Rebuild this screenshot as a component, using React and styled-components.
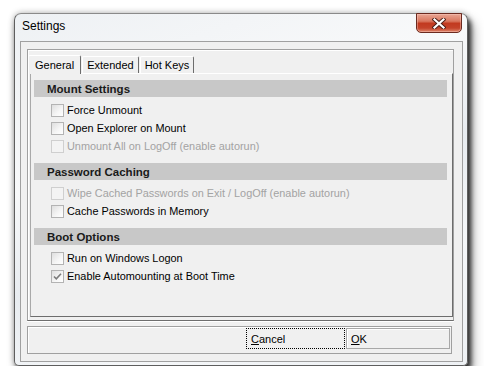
import styled, { createGlobalStyle } from 'styled-components';

const GlobalStyle = createGlobalStyle`
    body {
        margin: 0;
        background: #ffffff;
        font-family: "Liberation Sans", Arial, sans-serif;
    }
`

const sections = [
    {
        title: 'Mount Settings',
        options: [
            { label: 'Force Unmount' },
            { label: 'Open Explorer on Mount' },
            { label: 'Unmount All on LogOff (enable autorun)', disabled: true },
        ],
    },
    {
        title: 'Password Caching',
        options: [
            { label: 'Wipe Cached Passwords on Exit / LogOff (enable autorun)', disabled: true },
            { label: 'Cache Passwords in Memory' },
        ],
    },
    {
        title: 'Boot Options',
        options: [
            { label: 'Run on Windows Logon' },
            { label: 'Enable Automounting at Boot Time', checked: true },
        ],
    },
];

function Check() {
    return (
        <svg width="9" height="9" viewBox="0 0 9 9">
            <path d="M1 4.5 L3.3 6.8 L8 1.8" fill="none" stroke="#7b7b7b" strokeWidth="1.6" />
        </svg>
    )
}

function CloseGlyph() {
    return (
        <svg width="14" height="11" viewBox="0 0 14 11">
            <path d="M2.5 1.5 L11.5 9.5 M11.5 1.5 L2.5 9.5" stroke="#4a1d16" strokeWidth="4" strokeLinecap="square" />
            <path d="M2.5 1.5 L11.5 9.5 M11.5 1.5 L2.5 9.5" stroke="#ffffff" strokeWidth="2.2" strokeLinecap="square" />
        </svg>
    )
}

export default function App() {
    return (
        <Page>
            <GlobalStyle />
            <Window>
                <TitleBar>
                    <Title>Settings</Title>
                    <CloseButton><CloseGlyph /></CloseButton>
                </TitleBar>

                <Client>
                    <Panel>
                        <TabStrip>
                            <Tab $active>General</Tab>
                            <Tab>Extended</Tab>
                            <Tab>Hot Keys</Tab>
                        </TabStrip>

                        <TabBody>
                            {sections.map((section) => (
                                <Section key={section.title}>
                                    <SectionHeader>{section.title}</SectionHeader>
                                    {section.options.map((option) => (
                                        <Option key={option.label} $disabled={option.disabled}>
                                            <Box $disabled={option.disabled}>
                                                {option.checked && <Check />}
                                            </Box>
                                            <span>{option.label}</span>
                                        </Option>
                                    ))}
                                </Section>
                            ))}
                        </TabBody>
                    </Panel>

                    <Footer>
                        <FooterButton $focused><u>C</u>ancel</FooterButton>
                        <FooterButton $wide><u>O</u>K</FooterButton>
                    </Footer>
                </Client>
            </Window>
        </Page>
    )
}

const Page = styled.div`
    padding: 13px 0 0 14px;
`

const Window = styled.div`
    box-sizing: border-box;
    width: 454px;
    height: 353px;

    display: flex;
    flex-direction: column;

    border: 1px solid #5e5e5e;
    border-top-color: #8a8a8a;
    border-radius: 7px 7px 5px 5px;
    background: linear-gradient(160deg, #eef1f4 0%, #f8f9fa 35%, #e8ecf0 55%, #f5f7f9 75%, #eef1f4 100%);
    box-shadow: 3px 5px 5px rgba(0, 0, 0, 0.7), 5px 8px 12px rgba(0, 0, 0, 0.35), 0 0 6px rgba(0, 0, 0, 0.3);
`

const TitleBar = styled.div`
    height: 27px;
    flex-shrink: 0;

    display: flex;
    justify-content: space-between;
    align-items: flex-start;

    padding: 0 5px 0 7px;
`

const Title = styled.div`
    margin-top: 5px;
    font-size: 12px;
    line-height: 14px;
    color: #000000;
`

const CloseButton = styled.div`
    box-sizing: border-box;
    width: 46px;
    height: 20px;
    margin-top: -1px;

    display: flex;
    align-items: center;
    justify-content: center;

    border: 1px solid #6b2a20;
    border-radius: 0 0 5px 5px;
    background: linear-gradient(to bottom, #e9a694 0%, #d9775f 40%, #c23a20 52%, #c4432a 78%, #df876c 100%);
    box-shadow: inset 0 0 0 1px rgba(255, 210, 200, 0.4);
`

const Client = styled.div`
    flex: 1;
    margin: 0 4px 3px 5px;
    padding: 7px 0 0 6px;

    border: 1px solid #a0a0a0;
    background: #f0f0f0;
`

const Panel = styled.div`
    box-sizing: border-box;
    width: 427px;
    height: 272px;
    padding: 5px 0 0 0;

    border: 1px solid #a0a0a0;
    border-bottom-color: #6e6e6e;
    box-shadow: 0 1px 0 #ffffff, inset 1px 1px 0 #ffffff;
`

const TabStrip = styled.div`
    height: 18px;
    display: flex;
    align-items: flex-end;
    gap: 1px;
`

const Tab = styled.div`
    box-sizing: border-box;
    height: ${(p) => (p.$active ? '19px' : '17px')};
    padding: ${(p) => (p.$active ? '0 6px' : '0 4px')};
    margin-bottom: ${(p) => (p.$active ? '-1px' : '0')};
    position: relative;
    z-index: ${(p) => (p.$active ? 1 : 0)};

    display: flex;
    align-items: center;

    border: 1px solid #ffffff;
    border-right-color: #6d6d6d;
    border-bottom: none;
    border-radius: 2px 2px 0 0;
    background: #f0f0f0;

    font-size: 11px;
    color: #000000;
`

const TabBody = styled.div`
    box-sizing: border-box;
    width: 423px;
    height: 244px;
    margin-left: 2px;
    padding: 6px 5px 0 3px;

    border: 1px solid;
    border-color: #ffffff #6d6d6d #6d6d6d #a9a9a9;
    background: #f0f0f0;
`

const Section = styled.div`
    & + & {
        margin-top: 8px;
    }
`

const SectionHeader = styled.div`
    height: 17px;
    margin-bottom: 4px;
    padding-left: 13px;

    display: flex;
    align-items: center;

    background: #c8c8c8;

    font-size: 11.5px;
    font-weight: 700;
    color: #1a1a1a;
`

const Option = styled.div`
    height: 18px;
    padding-left: 17px;

    display: flex;
    align-items: center;
    gap: 3px;

    font-size: 10.9px;
    color: ${(p) => (p.$disabled ? '#a3a3a3' : '#000000')};
`

const Box = styled.div`
    box-sizing: border-box;
    width: 13px;
    height: 13px;

    display: flex;
    align-items: center;
    justify-content: center;

    border: 1px solid ${(p) => (p.$disabled ? '#cfcfcf' : '#b3b3b3')};
    background: ${(p) => (p.$disabled
        ? '#f3f3f3'
        : 'linear-gradient(135deg, #dedede 0%, #f6f6f6 60%, #ffffff 100%)')};
`

const Footer = styled.div`
    box-sizing: border-box;
    width: 425px;
    height: 28px;
    margin-top: 5px;
    padding: 1px 1px 0 0;

    display: flex;
    justify-content: flex-end;
    gap: 1px;

    border: 1px solid #a0a0a0;
    box-shadow: inset 1px 1px 0 #ffffff;
`

const FooterButton = styled.div`
    box-sizing: border-box;
    width: ${(p) => (p.$wide ? '104px' : '99px')};
    height: 21px;
    padding-left: 4px;

    display: flex;
    align-items: center;

    border: 1px ${(p) => (p.$focused ? 'dotted #000000' : 'solid #a8a8a8')};
    box-shadow: ${(p) => (p.$focused ? 'none' : 'inset 1px 1px 0 #ffffff')};

    font-size: 11px;
    color: #000000;

    u {
        text-decoration-thickness: 1px;
        text-underline-offset: 1px;
    }
`
